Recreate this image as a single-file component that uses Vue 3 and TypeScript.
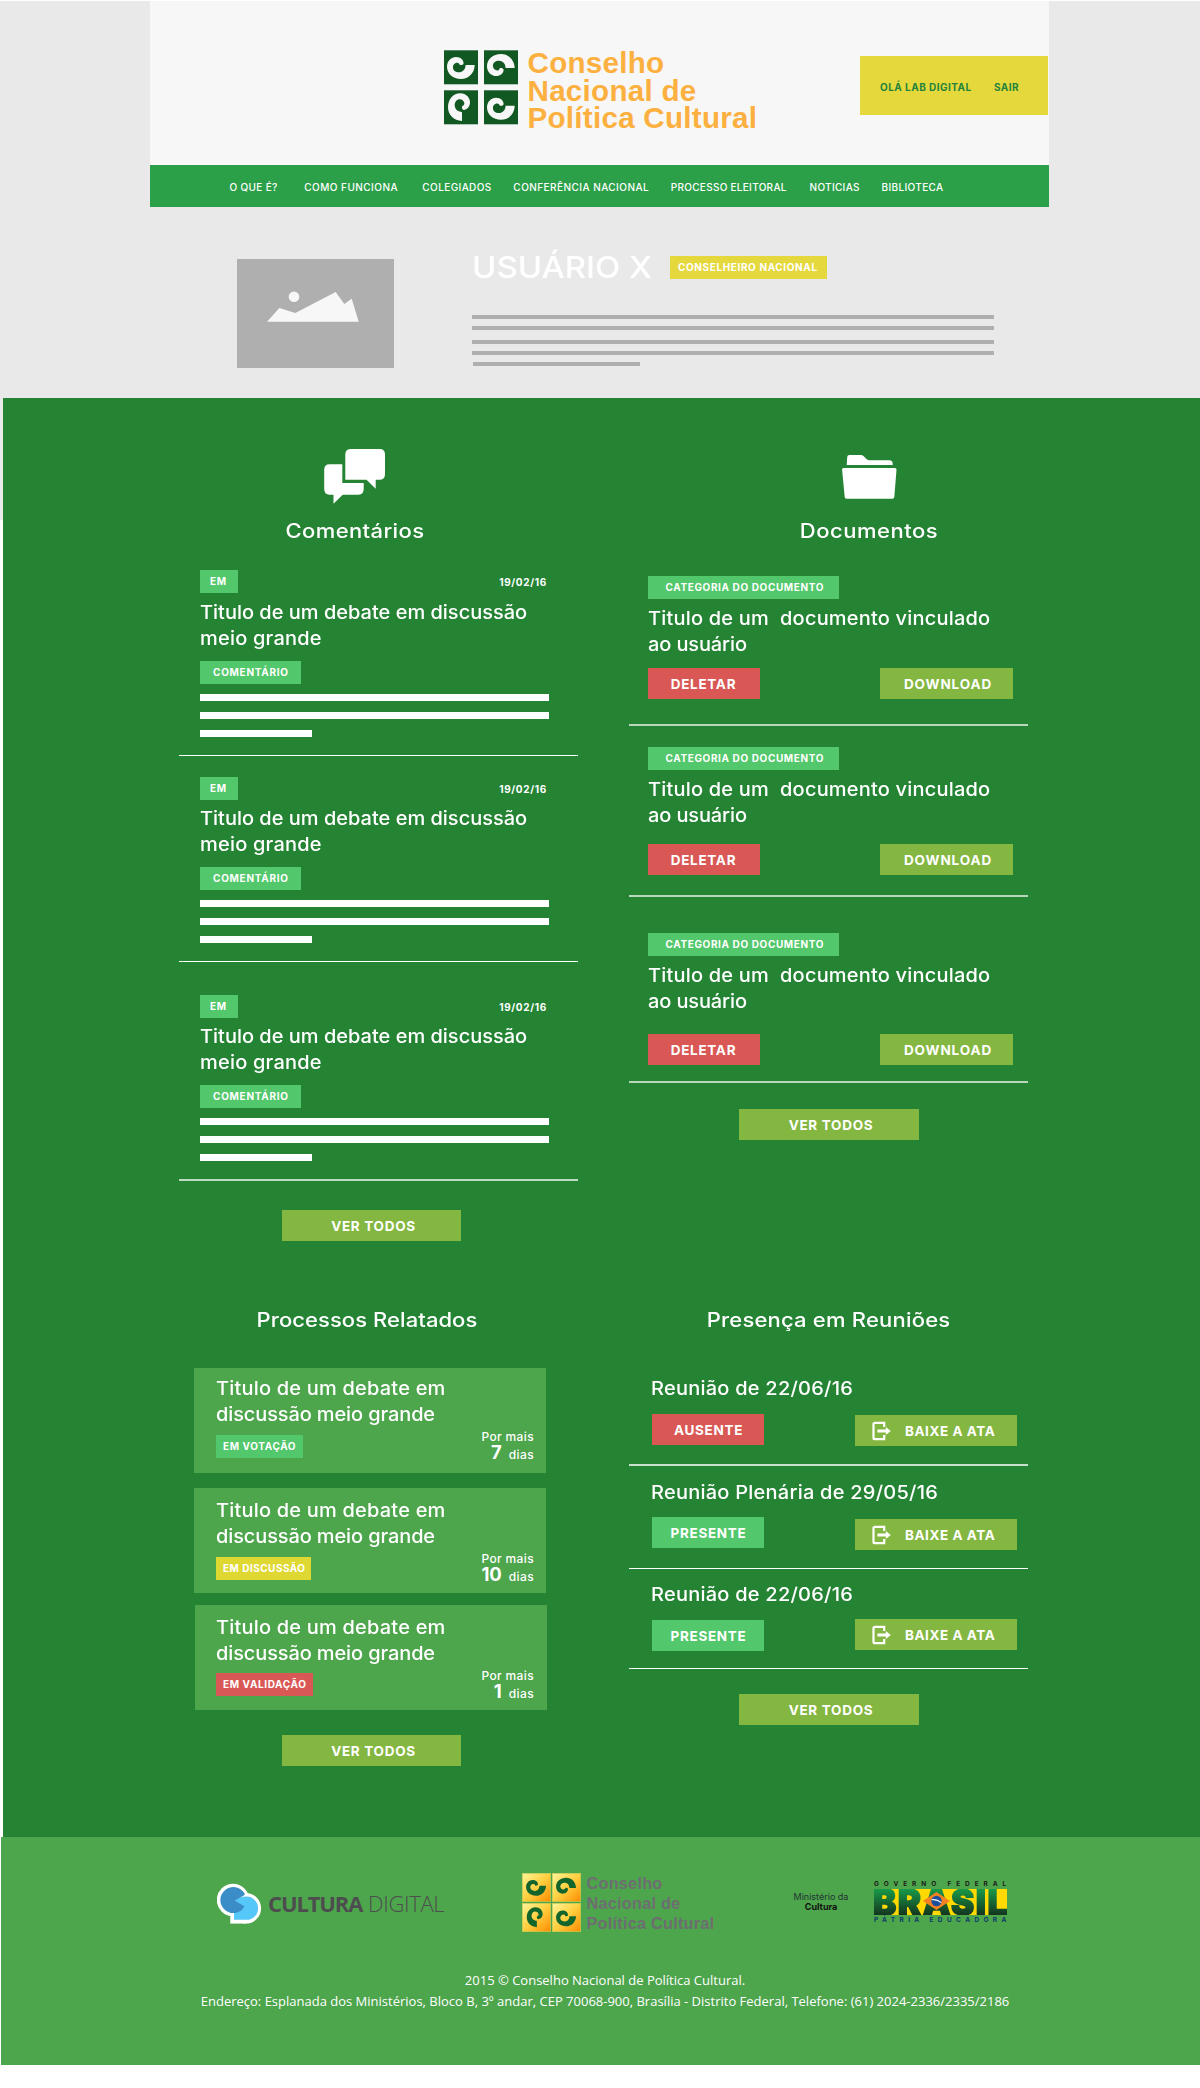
<script setup lang="ts">
interface NavItem { label: string; track: number }
interface Process { status: string; kind: string; days: number }
interface Meeting { title: string; present: boolean }

const nav: NavItem[] = [
  { label: 'O QUE É?', track: 0.034 },
  { label: 'COMO FUNCIONA', track: 0.047 },
  { label: 'COLEGIADOS', track: 0.04 },
  { label: 'CONFERÊNCIA NACIONAL', track: 0.045 },
  { label: 'PROCESSO ELEITORAL', track: 0.029 },
  { label: 'NOTICIAS', track: 0.032 },
  { label: 'BIBLIOTECA', track: 0.036 },
]
const comments: string[] = ['19/02/16', '19/02/16', '19/02/16']
const documents: number[] = [1, 2, 3]
const processes: Process[] = [
  { status: 'EM VOTAÇÃO', kind: 'voting', days: 7 },
  { status: 'EM DISCUSSÃO', kind: 'debate', days: 10 },
  { status: 'EM VALIDAÇÃO', kind: 'review', days: 1 },
]
const meetings: Meeting[] = [
  { title: 'Reunião de 22/06/16', present: false },
  { title: 'Reunião Plenária de 29/05/16', present: true },
  { title: 'Reunião de 22/06/16', present: true },
]

// One curl, reused in four orientations inside the 34-unit logo tiles.
const curl =
  'M30.7 14.7C30.5 23 24.5 28.7 17 28.7C9 28.7 3 23.5 3 16.5C3 10.5 7.5 6.7 12 6.7C16.5 6.7 19.7 9.6 19.6 13.2C19 14.6 17 15.2 15.6 14.4C15.4 12.9 13.9 12 12.3 12.5C10 13.2 8.9 15 8.9 17C8.9 20 11.5 22 15 22C18.7 22 21.5 19 21.6 14.7Z'
const turns: string[] = ['', 'translate(0 32.5) scale(1 -1)', 'translate(32.7 0) rotate(90)', 'translate(0 .8)']
</script>

<template>
  <div class="page">
    <header class="top">
      <div class="masthead">
        <div class="logo">
          <svg width="74" height="75" viewBox="0 0 74 75">
            <g v-for="(t, i) in turns" :key="i" :transform="`translate(${(i % 2) * 40} ${i > 1 ? 40.3 : 0.3})`">
              <rect width="34" height="34" fill="#125823" />
              <path :d="curl" :transform="t" fill="#f7f7f7" />
            </g>
          </svg>
          <p>Conselho<br />Nacional de<br />Política Cultural</p>
        </div>
        <div class="account"><span>OLÁ LAB DIGITAL</span><span>SAIR</span></div>
      </div>
      <nav class="menu">
        <a v-for="n in nav" :key="n.label" :style="{ letterSpacing: n.track + 'em' }">{{ n.label }}</a>
      </nav>
      <section class="profile">
        <div class="photo">
          <svg width="157" height="109" viewBox="0 0 157 109" fill="#f7f7f7">
            <circle cx="57" cy="37.8" r="5.3" />
            <path d="M30 62.7L42.3 49L58.3 54L98.7 33L107.3 45L114.7 39.7L121.7 62.7Z" />
          </svg>
        </div>
        <div class="bio">
          <div class="who">
            <h1><span>USUÁRIO X</span></h1>
            <span class="tag role">CONSELHEIRO NACIONAL</span>
          </div>
          <i v-for="n in 5" :key="n" class="stub"></i>
        </div>
      </section>
    </header>

    <main class="board">
      <div class="cols">
        <div class="col">
          <svg class="ico-talk" width="62" height="56" viewBox="0 0 62 56" fill="#fff">
            <path d="M26.8 0H55.8Q61 0 61 5.5V25Q61 30.8 55.5 30.8H51.7V39.7L42.5 30.8H21.3V5.5Q21.3 0 26.8 0Z" />
            <path d="M5.5 15.2H18.3V34H39.7V40Q39.7 45.7 34.5 45.7H18.7L9.5 54.8V45.7H5.5Q.2 45.7 .2 40V21Q.2 15.2 5.5 15.2Z" />
          </svg>
          <h2 class="h-comments">Comentários</h2>
          <article v-for="(date, i) in comments" :key="i" class="comment">
            <div class="meta"><span class="tag em">EM</span><time>{{ date }}</time></div>
            <h3>Titulo de um debate em discussão<br /><span class="loose">meio grande</span></h3>
            <span class="tag kind">COMENTÁRIO</span>
            <i class="bar"></i><i class="bar"></i><i class="bar short"></i>
            <hr />
          </article>
          <a class="btn all">VER TODOS</a>

          <h2 class="h-process">Processos Relatados</h2>
          <article v-for="p in processes" :key="p.status" class="process">
            <div>
              <h3><span class="loose">Titulo de um debate em</span><br /><span class="tight">discussão meio grande</span></h3>
              <span class="tag" :class="p.kind">{{ p.status }}</span>
            </div>
            <div class="left">Por mais<br /><b>{{ p.days }}</b><span>dias</span></div>
          </article>
          <a class="btn all">VER TODOS</a>
        </div>

        <div class="col">
          <svg class="ico-folder" width="55" height="45" viewBox="0 0 55 45" fill="#fff">
            <path d="M4.7 10L5.2 2Q5.4 0 7.4 0H18.5Q20.5 0 22 1.4L24.4 3.9Q25.8 5.3 27.8 5.3H47.5Q50.3 5.3 50.6 8L50.8 10Z" />
            <path d="M1.5 13H53Q54.6 13 54.5 14.7L52.3 42Q52.1 43.7 50.5 43.7H4.5Q2.9 43.7 2.7 42L.1 14.7Q0 13 1.5 13Z" />
          </svg>
          <h2 class="h-docs">Documentos</h2>
          <article v-for="d in documents" :key="d" class="doc">
            <span class="tag cat">CATEGORIA DO DOCUMENTO</span>
            <h3><span class="loose">Titulo de um&nbsp; documento vinculado</span><br /><span class="tight">ao usuário</span></h3>
            <div class="actions"><a class="btn red">DELETAR</a><a class="btn down">DOWNLOAD</a></div>
            <hr />
          </article>
          <a class="btn all r">VER TODOS</a>

          <h2 class="h-meet">Presença em Reuniões</h2>
          <article v-for="(m, i) in meetings" :key="i" class="meeting">
            <h3>{{ m.title }}</h3>
            <div class="actions">
              <span class="btn" :class="m.present ? 'mint' : 'red'">{{ m.present ? 'PRESENTE' : 'AUSENTE' }}</span>
              <a class="btn ata">
                <svg width="19" height="20" viewBox="0 0 19 20">
                  <path d="M12.2 6V1.8H3Q1.5 1.8 1.5 3.3V16.7Q1.5 18.2 3 18.2H12.2V14" fill="none" stroke="#fff" stroke-width="2.2" />
                  <path d="M5.4 8.6H13.8V6L18.8 10L13.8 14V11.4H5.4Z" fill="#fff" />
                </svg>
                BAIXE A ATA
              </a>
            </div>
            <hr />
          </article>
          <a class="btn all r">VER TODOS</a>
        </div>
      </div>
    </main>

    <footer class="foot">
      <div class="brands">
        <div class="cultura">
          <svg width="45" height="42" viewBox="0 0 45 42">
            <g fill="#fff"><circle cx="16" cy="17" r="16.2" /><circle cx="28.8" cy="25.3" r="15.3" /><path d="M13.3 30H29V40.6H13.3Z" /></g>
            <path d="M17 29V36.8H29.5A11.6 11.6 0 0 0 29.5 13.6Q22 13.6 18 17.6L27 24Q22 29 17 29Z" fill="#56c7f9" />
            <path d="M27.6 10.6A13 13 0 1 0 27.6 23.6L18 17.4L27.6 12Z" fill="#3a8dc6" />
          </svg>
          <p><strong>CULTURA</strong>DIGITAL</p>
        </div>
        <div class="cnpc">
          <svg width="60" height="60" viewBox="0 0 60 60">
            <defs>
              <linearGradient id="gold" x1="0" y1="0" x2="1" y2="1">
                <stop offset="0" stop-color="#fff59b" /><stop offset=".5" stop-color="#ffcf3f" /><stop offset="1" stop-color="#ff8a00" />
              </linearGradient>
            </defs>
            <g v-for="(t, i) in turns" :key="i" :transform="`translate(${(i % 2) * 30} ${i > 1 ? 30 : 0})`">
              <rect x=".3" y=".3" width="28.4" height="28.4" fill="url(#gold)" stroke="#c9cf55" stroke-width=".6" />
              <g transform="translate(1.9 2.1) scale(.72)"><path :d="curl" :transform="t" fill="#14652c" /></g>
            </g>
          </svg>
          <p>Conselho<br />Nacional de<br />Política Cultural</p>
        </div>
        <p class="minc">Ministério da<br /><b>Cultura</b></p>
        <div class="brasil">
          <small>GOVERNO FEDERAL</small>
          <div class="plate">
            <strong>BRASIL</strong>
            <svg width="27" height="18" viewBox="0 0 27 18">
              <path d="M0 9L13.5 0L27 9L13.5 18Z" fill="#f58220" />
              <circle cx="13.5" cy="9" r="5.2" fill="#1c4f9c" />
              <path d="M8.7 7.8Q13.5 6.8 18.3 10.6" fill="none" stroke="#fff" stroke-width="1.1" />
            </svg>
          </div>
          <small class="patria">PÁTRIA EDUCADORA</small>
        </div>
      </div>
      <p class="legal">
        2015 © Conselho Nacional de Política Cultural.<br />
        Endereço: Esplanada dos Ministérios, Bloco B, 3º andar, CEP 70068-900, Brasília - Distrito Federal, Telefone: (61) 2024-2336/2335/2186
      </p>
    </footer>
  </div>
</template>

<style>
body { background: #fff; }
</style>

<style scoped>
.page { width: 1200px; height: 2088px; padding-top: 1px; box-sizing: border-box; overflow: hidden; font-family: Inter, "Open Sans", sans-serif; color: #fff; }
h1, h2, h3, p { margin: 0; font-weight: 500; }
svg { display: block; flex: none; }
i { display: block; }

.top { height: 397px; background: #e9e9e9; }
.masthead { display: flex; align-items: flex-start; width: 899px; height: 164px; margin-left: 150px; background: #f7f7f7; }
.logo { display: flex; margin: 49px 0 0 294px; }
.logo p { margin: -1px 0 0 9.5px; font: bold 29.6px/27.7px "Liberation Sans", Arial, sans-serif; letter-spacing: .009em; color: #fcb040; white-space: nowrap; }
.account { display: flex; width: 188px; height: 59px; margin: 55px 1px 0 auto; padding: 3px 0 0 20px; box-sizing: border-box; align-items: center; background: #e5d83c; color: #24833a; font-size: 10px; font-weight: 700; letter-spacing: .047em; }
.account span:first-child { width: 114px; }
.menu { display: flex; align-items: center; width: 899px; height: 42px; margin-left: 150px; padding: 1px 0 0 79.5px; box-sizing: border-box; background: #2ca048; font-size: 10px; font-weight: 500; }
.menu a { margin-right: 21.7px; white-space: nowrap; }
.menu a:nth-child(1) { margin-right: 26.6px; }
.menu a:nth-child(2) { margin-right: 24.3px; }
.menu a:nth-child(5) { margin-right: 22.8px; }

.profile { display: flex; padding: 52px 0 0 237px; }
.photo { width: 157px; height: 109px; background: #afafaf; }
.bio { margin-left: 78px; margin-top: -3px; }
.who { display: flex; height: 23px; margin-bottom: 36px; }
.who h1 { width: 198px; font-size: 30.5px; line-height: 22px; white-space: nowrap; }
.who h1 span { display: inline-block; transform: scaleX(1.08); transform-origin: 0 50%; }
.stub { width: 522px; height: 4px; margin-bottom: 7px; background: #afafaf; }
.stub:nth-of-type(2) { margin-bottom: 10px; }
.stub:nth-of-type(5) { width: 167px; margin-left: 1px; }

.tag { display: block; height: 23px; line-height: 23px; box-sizing: border-box; background: #53c76b; font-size: 10px; font-weight: 700; letter-spacing: .062em; white-space: nowrap; }
.role { width: 157px; padding-left: 8px; background: #e5d83c; }
.btn { display: flex; align-items: center; justify-content: center; height: 31px; box-sizing: border-box; background: #84b741; font-size: 13.5px; font-weight: 700; letter-spacing: .052em; white-space: nowrap; }
.red { background: #d95855; }
.mint { background: #53c76b; }

.board { height: 1439px; padding-left: 3px; background: linear-gradient(#e9e9e9 122px, #fff 122px); }
.cols { display: flex; gap: 51px; height: 1439px; padding-left: 176px; background: #258434; }
.col { width: 399px; }
h2 { height: 30px; line-height: 30px; font-size: 20px; text-align: center; white-space: nowrap; transform: scaleX(1.1); }
h3 { height: 52px; padding-top: 1px; margin-bottom: -1px; font-size: 18.7px; line-height: 26px; white-space: nowrap; transform: scaleX(1.07); transform-origin: 0 50%; }
.loose { letter-spacing: .01em; }
.tight { letter-spacing: -.006em; }
hr { height: 1px; margin: 0; border: 0; background: #fff; }
.all { width: 179px; margin-left: 103px; padding-left: 4px; }
.all.r { width: 180px; margin-left: 110px; }

.ico-talk { margin: 51px 0 0 145px; }
.h-comments { width: 352px; margin: 11px 0 24px; letter-spacing: .017em; }
.meta { display: flex; justify-content: space-between; }
.meta, .comment .kind, .comment h3 { margin-left: 21px; }
.em { width: 38px; padding-left: 10px; }
.comment time { margin: 6px 31px 0 0; font-size: 10px; line-height: 13px; font-weight: 700; letter-spacing: .068em; }
.comment h3 { margin-top: 4.5px; }
.comment .kind { width: 101px; margin-top: 10.5px; padding-left: 13px; letter-spacing: .073em; }
.bar { width: 349px; height: 7px; margin: 11px 0 0 21px; background: #fff; }
.kind + .bar { margin-top: 10px; }
.bar.short { width: 112px; }
.comment hr { margin-top: 18px; }
.comment:nth-of-type(1) h3 { margin-top: 5.5px; }
.comment { height: 185px; }
.comment:nth-of-type(1) { height: 186px; margin-bottom: 21px; }
.comment:nth-of-type(2) { margin-bottom: 33px; }
.comment:nth-of-type(3) { height: 186px; margin-bottom: 29px; }
.comment:nth-of-type(3) hr { height: 2px; opacity: .7; }

.h-process { width: 376px; margin: 64px 0 33px; letter-spacing: .003em; }
.process { display: flex; justify-content: space-between; width: 352px; height: 105px; margin: 0 0 15px 15px; padding: 7px 12px 0 22px; box-sizing: border-box; background: #4da54c; }
.process .tag { margin-top: 7.5px; padding-left: 7px; }
.voting { width: 87px; }
.debate { width: 95px; letter-spacing: .048em; background: #dfd832; }
.review { width: 97px; background: #d95855; }
.process.process:nth-of-type(5) { margin-bottom: 12px; padding-top: 9px; }
.process.process:nth-of-type(6) { margin: 0 0 25px 16px; padding: 8.5px 13px 0 21px; }
.left { margin-top: 53px; font-size: 12px; line-height: 18px; font-weight: 500; letter-spacing: .03em; text-align: right; }
.left b { margin-right: 7px; font-size: 18.5px; line-height: 1px; letter-spacing: 0; }

.ico-folder { margin: 57px 0 0 212.5px; }
.h-docs { width: 316px; margin: 16px 0 30px 82px; letter-spacing: .023em; }
.cat { width: 191px; margin-left: 18.5px; padding-left: 18px; }
.doc h3 { margin-top: 6px; margin-left: 18.5px; }
.actions { display: flex; justify-content: space-between; align-items: flex-start; }
.doc .actions { margin: 11px 15px 25px 18.5px; }
.doc .red { width: 112px; }
.down { width: 133px; padding-left: 3px; letter-spacing: .065em; }
.doc hr { height: 2px; margin-bottom: 21px; opacity: .68; }
.doc:nth-of-type(2) .actions { margin-top: 16px; margin-bottom: 20px; }
.doc:nth-of-type(2) hr { margin-bottom: 36px; }
.doc:nth-of-type(3) .actions { margin-top: 20px; margin-bottom: 16px; }
.doc:nth-of-type(3) hr { margin-bottom: 26px; }

.h-meet { margin: 165px 0 40px; letter-spacing: .009em; }
.meeting h3 { height: 26px; margin-left: 21.5px; letter-spacing: .012em; }
.meeting .actions { margin: 13px 11px 18px 23px; }
.meeting span.btn { width: 112px; padding-left: 1px; }
.ata { width: 162px; margin-top: 1px; justify-content: flex-start; gap: 14px; padding-left: 17px; letter-spacing: .041em; }
.meeting hr { margin-bottom: 13px; }
.meeting:nth-of-type(4) hr { height: 2px; opacity: .75; }
.meeting:nth-of-type(5) .actions { margin-top: 12px; }
.meeting:nth-of-type(5) .ata { margin-top: 2px; }
.meeting:nth-of-type(5) hr { margin-bottom: 12px; }
.meeting:nth-of-type(6) .actions { margin: 13px 11px 17px 23px; }
.meeting:nth-of-type(6) .ata { margin-top: -1px; }
.meeting:nth-of-type(6) hr { margin-bottom: 25px; }

.foot { height: 228px; margin-left: 1px; background: #4da54c; }
.brands { display: flex; align-items: flex-start; height: 133px; }
.cultura { display: flex; width: 305px; margin: 46px 0 0 216px; }
.cultura p { margin: 5px 0 0 6px; font: 300 22px/30px "Open Sans", sans-serif; letter-spacing: -.015em; color: #4d4d4f; white-space: nowrap; }
.cultura strong { display: inline-block; width: 100px; font-weight: 700; letter-spacing: -.051em; }
.cnpc { display: flex; width: 271px; margin-top: 36px; }
.cnpc p { margin-left: 4.5px; font: bold 16.3px/20px "Liberation Sans", Arial, sans-serif; letter-spacing: .014em; color: #6d6e71; white-space: nowrap; }
.minc { width: 56px; margin-top: 55px; font-size: 9px; line-height: 10.4px; font-weight: 400; color: #233; text-align: center; white-space: nowrap; }
.minc b { color: #111; }
.brasil { width: 133px; margin: 43px 0 0 25px; }
.brasil small { display: block; height: 9px; font-size: 6.5px; line-height: 8px; font-weight: 700; letter-spacing: .756em; color: #1d1d1b; white-space: nowrap; }
.brasil .patria { margin-top: 1px; letter-spacing: .676em; color: #0b3a6b; }
.plate { position: relative; height: 26px; overflow: hidden; background: #ffd900; }
.plate strong { display: block; font-size: 35px; line-height: 26px; font-weight: 900; letter-spacing: .042em; margin-left: -1px; color: transparent; -webkit-text-stroke: 1.4px transparent; background: linear-gradient(#189a48, #14351f); background-clip: text; -webkit-background-clip: text; white-space: nowrap; }
.plate svg { position: absolute; left: 49px; top: 3px; }
.legal { padding-left: 9px; font: 400 13px/21px "Open Sans", sans-serif; text-align: center; white-space: nowrap; }
</style>
